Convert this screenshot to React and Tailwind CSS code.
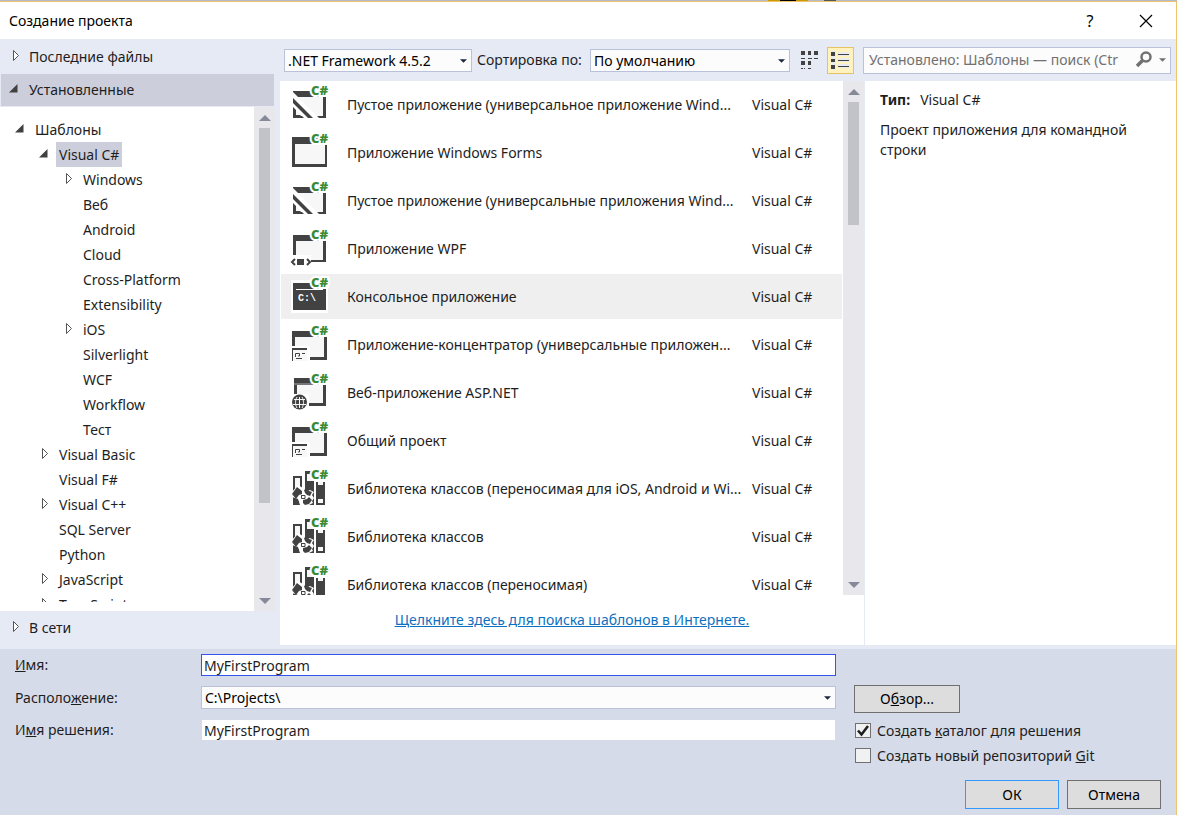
import React from "react";
import { useState } from "react";

const treeItems = [
  { name: "Шаблоны", level: 0, state: "open" },
  { name: "Visual C#", level: 1, state: "open" },
  { name: "Windows", level: 2, state: "closed" },
  { name: "Веб", level: 2 },
  { name: "Android", level: 2 },
  { name: "Cloud", level: 2 },
  { name: "Cross-Platform", level: 2 },
  { name: "Extensibility", level: 2 },
  { name: "iOS", level: 2, state: "closed" },
  { name: "Silverlight", level: 2 },
  { name: "WCF", level: 2 },
  { name: "Workflow", level: 2 },
  { name: "Тест", level: 2 },
  { name: "Visual Basic", level: 1, state: "closed" },
  { name: "Visual F#", level: 1 },
  { name: "Visual C++", level: 1, state: "closed" },
  { name: "SQL Server", level: 1 },
  { name: "Python", level: 1 },
  { name: "JavaScript", level: 1, state: "closed" },
  { name: "TypeScript", level: 1, state: "closed" },
];

const indents = ["pl-[14px]", "pl-[38px]", "pl-[62px]"];

const templates = [
  { icon: "empty", name: "Пустое приложение (универсальное приложение Wind..." },
  { icon: "forms", name: "Приложение Windows Forms" },
  { icon: "empty", name: "Пустое приложение (универсальные приложения Wind..." },
  { icon: "wpf", name: "Приложение WPF" },
  { icon: "console", name: "Консольное приложение" },
  { icon: "hub", name: "Приложение-концентратор (универсальные приложен..." },
  { icon: "web", name: "Веб-приложение ASP.NET" },
  { icon: "hub", name: "Общий проект" },
  { icon: "library", name: "Библиотека классов (переносимая для iOS, Android и Wi..." },
  { icon: "library", name: "Библиотека классов" },
  { icon: "library", name: "Библиотека классов (переносимая)" },
];

function Expander({ state }) {
  return (
    <svg className="w-3 h-4 shrink-0" viewBox="0 0 12 16" aria-hidden="true">
      {state === "open" && <path d="M9.500 2v8.500H1z" fill="#404040" />}
      {state === "closed" && (
        <path d="M4.500 1.500v10l5-5z" fill="#fff" stroke="#555" strokeWidth="1" />
      )}
    </svg>
  );
}

function EmptyShape() {
  return (
    <>
      <path d="M1 5h33v27H1z" fill="#424242" />
      <path d="M4 11h27v19H4z" fill="#f7f7f7" />
      <path d="M1 6L27 32H12L1 21z" fill="#fff" />
      <path d="M1 12v5l15 15h5z" fill="#424242" />
      <path d="M1 22v10h10l-3-3H4v-4z" fill="#424242" />
    </>
  );
}

function HubShape() {
  return (
    <>
      <path d="M0 5h35v29H0z" fill="#424242" />
      <path d="M3 11h29v20H3z" fill="#f7f7f7" />
      <path d="M0 20h18v15H0z" fill="#fff" />
      <path d="M0 22h15v13H0z" fill="#f7f7f7" />
      <path d="M0 22h15v2H0zM0 24h1v11H0z" fill="#424242" />
      <path d="M3.500 31v-3.500h4V30H6M10 27.500h3M4 32.500h6" stroke="#424242" fill="none" />
    </>
  );
}

function WpfShape() {
  return (
    <>
      <path d="M1 5h33v27H1z" fill="#424242" />
      <path d="M4 11h27v19H4z" fill="#f7f7f7" />
      <path d="M-1 25h20v11H-1z" fill="#fff" />
      <path d="M5 29h7v6H5z" fill="#424242" />
      <path d="M3 29l-3 3 3 3M15 29l3 3-3 3" stroke="#424242" strokeWidth="2" fill="none" />
    </>
  );
}

function WebShape() {
  return (
    <>
      <path d="M2 4h32v28H2z" fill="#424242" />
      <path d="M2 9h32v2H2z" fill="#777" />
      <path d="M5 11h26v18H5z" fill="#f7f7f7" />
      <path d="M0 20h17v16H0z" fill="#fff" />
      <circle cx="7.500" cy="28" r="7.500" fill="#424242" />
      <path
        d="M2 25.500h11M1 30.500h13M7.500 23v11M5 23c-2 4-2 7 0 11M10 23c2 4 2 7 0 11"
        stroke="#f7f7f7"
        fill="none"
      />
    </>
  );
}

function LibraryShape() {
  return (
    <>
      <path d="M1 6h9v29H1z" fill="#424242" />
      <path d="M3 8h5v10H3z" fill="#f7f7f7" />
      <path d="M13 1h9v34h-9z" fill="#424242" />
      <path d="M15 4h8v7h-8z" fill="#f7f7f7" />
      <path d="M24 12h9v23h-9z" fill="#424242" />
      <path d="M26 12h5v3h-5zM26 29h5v4h-5z" fill="#f7f7f7" />
      {/* interlocking pieces in front of the books */}
      <path d="M0 22l6-7 5 3 4 3 3-1 4 2-2 3 2 3-2 3 1 2-4 2H8l-2-6-6-2z" fill="#fff" />
      <path d="M0 24l5-7 5 4v3l-3 1-3 4z" fill="#424242" />
      <path d="M12 20l3-2 2 3 3 1-2 4-3-1-2-2z" fill="#424242" />
      <path d="M11 30l4-1 2-2 3 3-3 4-4 1-2-2z" fill="#424242" />
      <path d="M9.500 25v3.500H13V25.500h-3" stroke="#424242" fill="none" />
      <path d="M1 31h6v4H1z" fill="#424242" />
    </>
  );
}

function TemplateIcon({ kind }) {
  return (
    <svg className="w-[38px] h-[37px] shrink-0 overflow-visible" viewBox="-1 0 38 37" aria-hidden="true">
      {kind === "empty" && <EmptyShape />}
      {kind === "forms" && (
        <>
          <path d="M0 3h35v30H0z" fill="#424242" />
          <path d="M3 10h30v20H3z" fill="#f7f7f7" />
        </>
      )}
      {kind === "wpf" && <WpfShape />}
      {kind === "console" && (
        <>
          <path d="M-1 2h21V0h17v10h-1v25H-1z" fill="#fff" />
          <path d="M1 5h33v27H1z" fill="#424242" />
          <path d="M4 11h27v1H4z" fill="#fff" />
          <text x="6" y="23" fill="#fff" fontSize="10" fontWeight="bold" fontFamily="Liberation Mono, monospace">
            C:\
          </text>
        </>
      )}
      {kind === "hub" && <HubShape />}
      {kind === "web" && <WebShape />}
      {kind === "library" && <LibraryShape />}
      <text
        x="19"
        y="9"
        fill="#388a34"
        stroke="#fff"
        strokeWidth="4"
        paintOrder="stroke"
        fontSize="13"
        fontWeight="800"
        fontFamily="Open Sans, sans-serif"
      >
        C#
      </text>
    </svg>
  );
}

function ScrollBar({ thumb }) {
  return (
    <div className="w-[21px] shrink-0 flex flex-col items-center bg-[#e8e8ec] pt-2 pb-[7px]">
      <svg className="w-3 h-[6px] shrink-0" viewBox="0 0 12 6" aria-hidden="true">
        <path d="M0 6l6-6 6 6z" fill="#868999" />
      </svg>
      <div className="flex-1 w-[11px] my-[7px]">
        <div className={`w-full bg-[#c2c3c9] ${thumb}`}></div>
      </div>
      <svg className="w-3 h-[6px] shrink-0" viewBox="0 0 12 6" aria-hidden="true">
        <path d="M0 0l6 6 6-6z" fill="#868999" />
      </svg>
    </div>
  );
}

function DropDown({ id, label, value, className }) {
  return (
    <div className={`relative ${className}`}>
      <select
        id={id}
        aria-label={label}
        className="appearance-none block w-full h-[23px] pt-px pl-[3px] pr-6 leading-5 bg-[#fcfcfc] border border-[#b9c2da] text-black outline-none"
      >
        <option>{value}</option>
      </select>
      <svg className="absolute right-[5px] top-[10px] w-[7px] h-1 pointer-events-none" viewBox="0 0 8 4" aria-hidden="true">
        <path d="M0 0h8L4 4z" fill="#1b293e" />
      </svg>
    </div>
  );
}

function CheckBox({ checked, onChange, children }) {
  return (
    <label className="flex items-center gap-[6px] h-[25px]">
      <span className="relative w-4 h-[15px] shrink-0">
        <input
          type="checkbox"
          checked={checked}
          onChange={onChange}
          className="appearance-none block w-4 h-[15px] bg-[#f0f1f3] border border-[#717171]"
        />
        {checked && (
          <svg className="absolute inset-0 w-4 h-[15px] pointer-events-none" viewBox="0 0 16 15" aria-hidden="true">
            <path d="M3 7.500l3.500 4L13 3" stroke="#1e1e1e" strokeWidth="2.500" fill="none" />
          </svg>
        )}
      </span>
      <span>{children}</span>
    </label>
  );
}

function App() {
  const [selected, setSelected] = useState(4);
  const [name, setName] = useState("MyFirstProgram");
  const [solution, setSolution] = useState("MyFirstProgram");
  const [createDir, setCreateDir] = useState(true);
  const [createGit, setCreateGit] = useState(false);

  return (
    <div className="h-screen flex flex-col bg-[#d6dbe9] font-['Noto_Sans',sans-serif] text-sm leading-5 text-[#1e1e1e]">
      {/* edge of the window behind the dialog */}
      <div className="flex h-px shrink-0 bg-[#b4bac8]">
        <div className="w-[768px]"></div>
        <div className="w-3 bg-[#c79a00]"></div>
        <div className="w-4 bg-black"></div>
        <div className="w-3 bg-[#c79a00]"></div>
        <div className="w-4"></div>
        <div className="w-3 bg-[#555]"></div>
      </div>

      <div className="flex-1 min-h-0 flex flex-col border-t border-r border-[#eec36b]">
        <header className="flex items-center h-[37px] shrink-0 pl-[9px] pr-[22px] bg-white text-black">
          <h1 className="flex-1">Создание проекта</h1>
          <button className="w-4 mr-10 text-base" aria-label="Справка">?</button>
          <button aria-label="Закрыть">
            <svg className="w-4 h-4" viewBox="0 0 16 16" aria-hidden="true">
              <path d="M2 2l12 12M14 2L2 14" stroke="#000" strokeWidth="1.200" />
            </svg>
          </button>
        </header>

        <main className="flex-1 min-h-0 flex bg-[#e6eaf5] pb-1">
          <nav className="w-[275px] shrink-0 flex flex-col mr-[5px]">
            <button className="flex items-center gap-2 h-[35px] pl-[9px]">
              <Expander state="closed" /> Последние файлы
            </button>
            <button className="flex items-center gap-[9px] h-8 pl-[7px] mx-px mb-px bg-[#cccedb]">
              <Expander state="open" /> Установленные
            </button>
            <div className="flex-1 min-h-0 flex">
              <div className="flex-1 bg-white pt-[10px] pb-[9px]">
                <ul className="h-full overflow-hidden">
                  {treeItems.map((item) => (
                    <li key={item.name} className={`flex items-center gap-[6px] h-[25px] ${indents[item.level]}`}>
                      <Expander state={item.state} />
                      <button
                        className={`h-[25px] px-[3px] whitespace-nowrap ${
                          item.name === "Visual C#" ? "bg-[#cccedb]" : ""
                        }`}
                      >
                        {item.name}
                      </button>
                    </li>
                  ))}
                </ul>
              </div>
              <ScrollBar thumb="h-[81%]" />
            </div>
            <button className="flex items-center gap-2 h-[34px] pl-[9px]">
              <Expander state="closed" /> В сети
            </button>
          </nav>

          <div className="flex-1 min-w-0 flex flex-col">
            <div className="flex items-center h-[42px] shrink-0 pl-1 pr-[5px]">
              <DropDown label="Платформа" value=".NET Framework 4.5.2" className="w-[188px] shrink-0" />
              <label htmlFor="sort" className="w-[118px] pl-[5px] shrink-0 whitespace-nowrap">
                Сортировка по:
              </label>
              <DropDown id="sort" value="По умолчанию" className="w-[200px] shrink-0" />
              <button className="ml-[10px] mr-2 shrink-0" aria-label="Мелкие значки">
                <svg className="w-[19px] h-5" viewBox="0 0 19 20" shapeRendering="crispEdges" aria-hidden="true">
                  <path d="M1 1h4v4H1zM8 1h3v4H8zM14 1h4v4h-4zM1 11h4v4H1zM8 11h3v4H8z" fill="#424242" />
                  <path d="M1 8.500h4M8 8.500h4M14 8.500h4M1 18.500h2M4 18.500h1M8 18.500h3" stroke="#424242" />
                </svg>
              </button>
              <button
                className="w-[27px] h-[27px] shrink-0 flex items-center justify-center bg-[#fff2be] border border-[#e5c365]"
                aria-label="Средние значки"
              >
                <svg className="w-[19px] h-[19px]" viewBox="0 0 19 19" shapeRendering="crispEdges" aria-hidden="true">
                  <path d="M0 0h5v19H0zM6 1h13v4H6zM6 7h13v4H6zM6 13h13v4H6z" fill="#e9ecf0" />
                  <path d="M0 1h4v4H0zM0 8h4v3H0zM0 14h4v4H0z" fill="#424242" />
                  <path d="M7 3.500h11M7 9.500h11M7 15.500h11" stroke="#424242" />
                </svg>
              </button>
              <div className="flex-1 flex items-center h-[27px] ml-[9px] pl-[5px] pr-1 bg-[#fcfcfc] border border-[#b9c2da]">
                <input
                  type="search"
                  aria-label="Поиск шаблонов"
                  placeholder="Установлено: Шаблоны — поиск (Ctr"
                  className="flex-1 min-w-0 outline-none placeholder:text-[#717171]"
                />
                <svg className="w-[18px] h-[18px] mr-[6px] shrink-0" viewBox="0 0 18 18" aria-hidden="true">
                  <circle cx="11" cy="6" r="4.500" fill="none" stroke="#717171" strokeWidth="2.500" />
                  <path d="M7.500 9.500L2 15" stroke="#717171" strokeWidth="3.500" />
                </svg>
                <svg className="w-[7px] h-1" viewBox="0 0 8 4" aria-hidden="true">
                  <path d="M0 0h8L4 4z" fill="#717171" />
                </svg>
              </div>
            </div>

            <div className="flex-1 min-h-0 flex">
              <section className="w-[585px] shrink-0 flex flex-col bg-white border-r border-[#e6eaf5]">
                <div className="flex-1 min-h-0 flex">
                  <ul className="flex-1 min-w-0 overflow-hidden pt-px pl-px pr-px">
                    {templates.map((item, index) => (
                      <li key={index} className="mb-[3px]">
                        <button
                          onClick={() => setSelected(index)}
                          className={`flex items-center w-full h-[45px] pl-[10px] text-left whitespace-nowrap ${
                            selected === index ? "bg-[#efefef]" : ""
                          }`}
                        >
                          <TemplateIcon kind={item.icon} />
                          <span className="w-[405px] pl-[18px] box-content shrink-0">{item.name}</span>
                          <span>Visual C#</span>
                        </button>
                      </li>
                    ))}
                  </ul>
                  <ScrollBar thumb="h-[26%]" />
                </div>
                <div className="h-[50px] shrink-0 flex justify-center items-center">
                  <a href="#online" className="text-[#0e70c0] underline">
                    Щелкните здесь для поиска шаблонов в Интернете.
                  </a>
                </div>
              </section>
              <aside className="flex-1 min-w-0 bg-white px-[15px] py-[9px]">
                <p className="mb-[10px]">
                  <b className="mr-[10px]">Тип:</b>Visual C#
                </p>
                <p>Проект приложения для командной строки</p>
              </aside>
            </div>
          </div>
        </main>

        <footer className="shrink-0 flex flex-col pt-[5px] pb-[6px] pr-[15px]">
          <div className="flex">
            <div className="w-[836px] grid grid-cols-[186px_1fr] gap-y-[10px] pl-[15px] content-start items-center">
              <label htmlFor="name">
                <u>И</u>мя:
              </label>
              <input
                id="name"
                value={name}
                onChange={(e) => setName(e.target.value)}
                className="h-[22px] px-[2px] bg-white border border-[#3355ee] outline-none"
              />
              <label htmlFor="location">
                Располо<u>ж</u>ение:
              </label>
              <DropDown id="location" value="C:\Projects\" className="w-full" />
              <label htmlFor="solution">
                И<u>м</u>я решения:
              </label>
              <input
                id="solution"
                value={solution}
                onChange={(e) => setSolution(e.target.value)}
                className="h-[22px] px-[2px] bg-white border border-[#d6dbe9] outline-none"
              />
            </div>
            <div className="pt-[31px] pl-[18px]">
              <button className="block w-[106px] h-7 mb-[5px] bg-[#dddddd] border border-[#707070] text-black">
                О<u>б</u>зор...
              </button>
              <div className="pl-px">
                <CheckBox checked={createDir} onChange={() => setCreateDir(!createDir)}>
                  Создать <u>к</u>аталог для решения
                </CheckBox>
                <CheckBox checked={createGit} onChange={() => setCreateGit(!createGit)}>
                  Создать новый репозиторий <u>G</u>it
                </CheckBox>
              </div>
            </div>
          </div>
          <div className="flex justify-end gap-2 mt-3">
            <button className="w-[94px] h-[29px] bg-[#dddddd] border border-[#3399ff] text-black">ОК</button>
            <button className="w-[94px] h-[29px] bg-[#dddddd] border border-[#707070] text-black">Отмена</button>
          </div>
        </footer>
      </div>
    </div>
  );
}

export default App;
